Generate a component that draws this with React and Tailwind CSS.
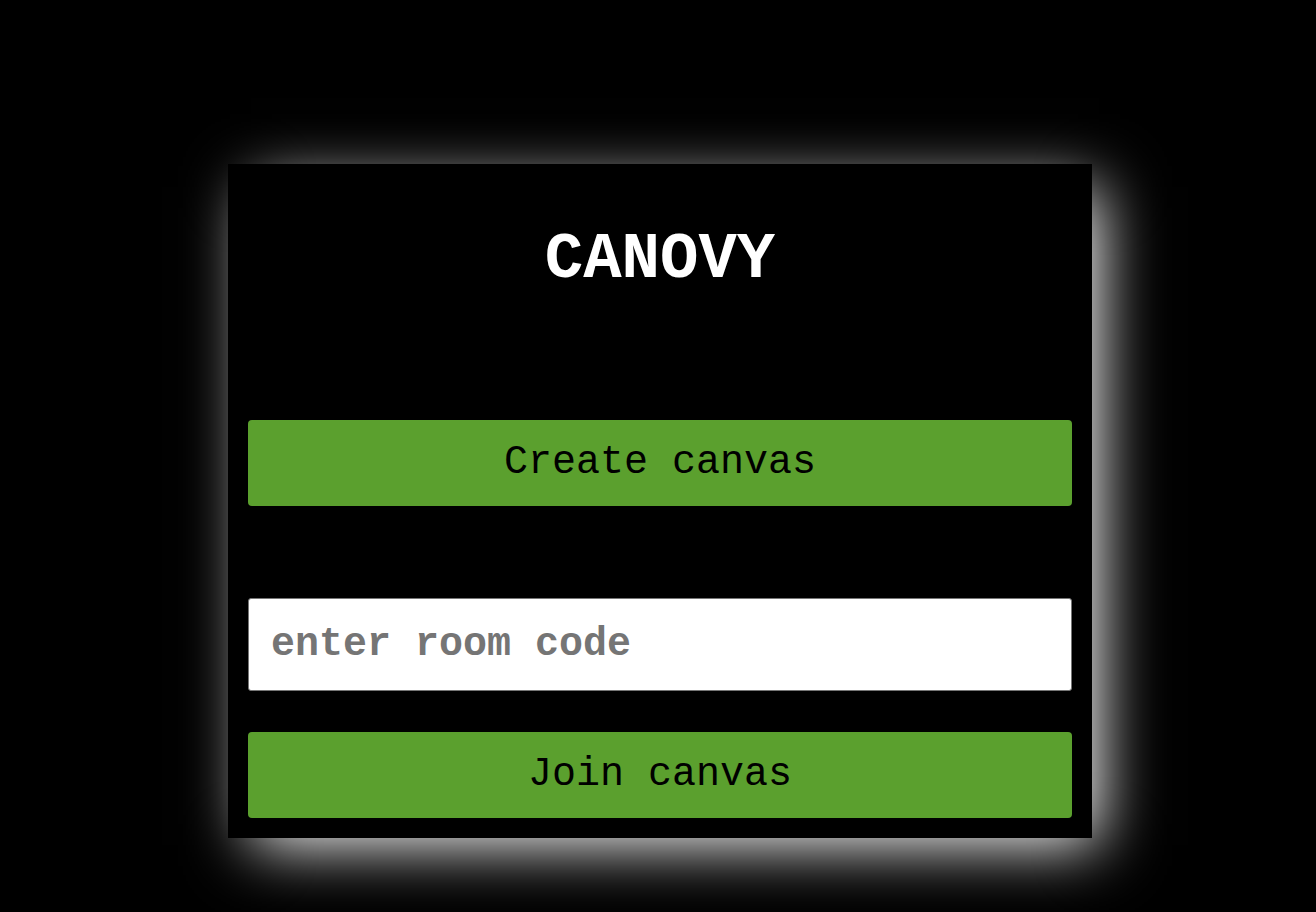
import React, { useState } from 'react';

const mono = { fontFamily: '"Liberation Mono", "Courier New", monospace' };

export default function App() {
  const [code, setCode] = useState('');

  return (
    <div className="min-h-screen bg-black flex justify-center pt-[164px] pl-[4px]" style={mono}>
      {/* card */}
      <div className="w-[864px] h-[674px] bg-black px-5 pb-5 flex flex-col shadow-[15px_15px_60px_-8px_#ffffff]">
        <h1 className="mt-[64px] text-white font-bold text-[64px] leading-[64px] text-center">CANOVY</h1>

        <button className="mt-[128px] h-[86px] w-full bg-[#5ba02e] rounded-[4px] text-black text-[40px]">
          Create canvas
        </button>

        <input
          value={code}
          onChange={(e) => setCode(e.target.value)}
          placeholder="enter room code"
          className="mt-[92px] h-[93px] w-full bg-white border border-[#767676] rounded-[3px] px-[22px] text-[40px] font-bold text-black placeholder:text-[#757575] outline-none"
        />

        <button className="mt-[41px] h-[86px] w-full bg-[#5ba02e] rounded-[4px] text-black text-[40px]">
          Join canvas
        </button>
      </div>
    </div>
  );
}
